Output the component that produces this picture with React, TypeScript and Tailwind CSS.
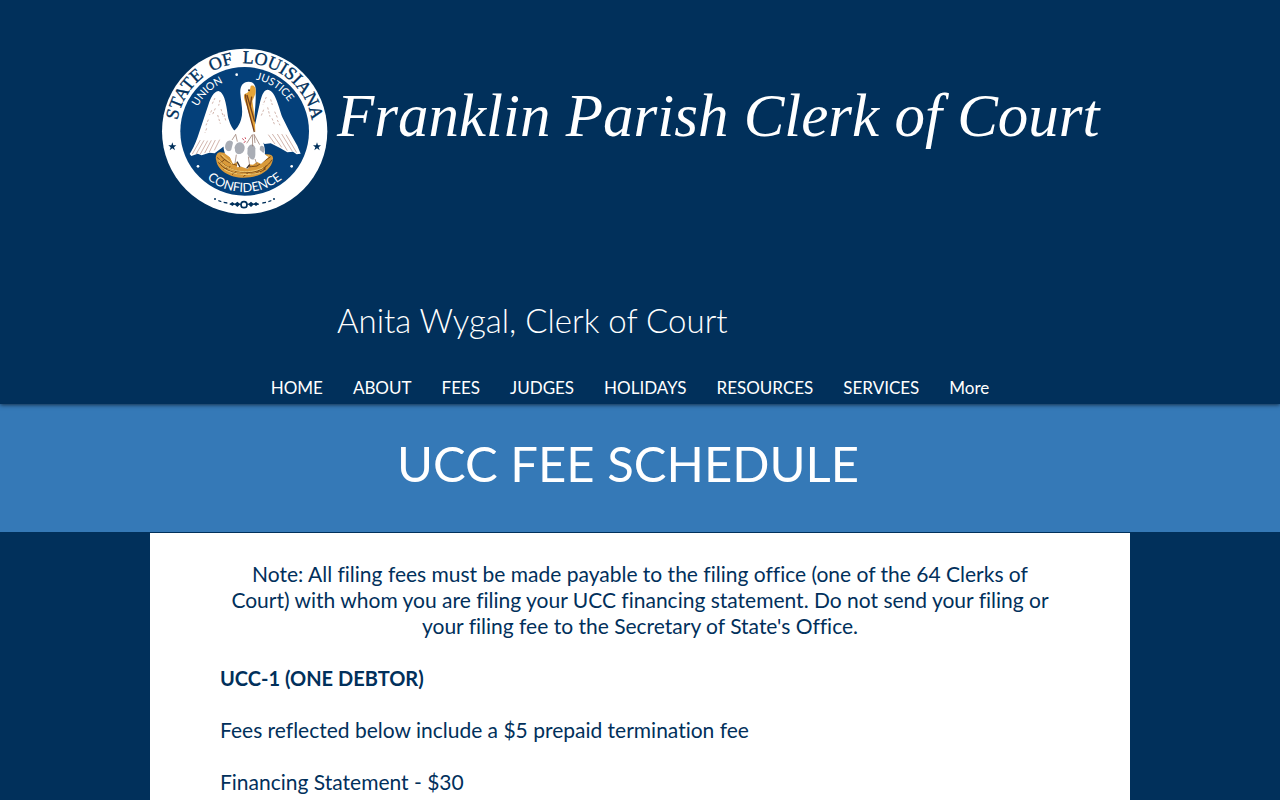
const navItems = [
  "HOME",
  "ABOUT",
  "FEES",
  "JUDGES",
  "HOLIDAYS",
  "RESOURCES",
  "SERVICES",
  "More",
];

function Star({ x, y }: { x: number; y: number }) {
  return (
    <path
      transform={`translate(${x} ${y})`}
      d="M0-13 3-4 12-4 5 2 8 11 0 5-8 11-5 2-12-4-3-4Z"
      fill="#01305b"
    />
  );
}

function StateSeal() {
  return (
    <svg
      viewBox="18 24 504 504"
      className="w-[168px] shrink-0"
      role="img"
      aria-label="State of Louisiana seal"
    >
      <defs>
        <path id="ring-top" d="M66 294A204 204 0 1 1 472 294" />
        <path id="inner-top" d="M110 274A159 159 0 0 1 428 274" />
        <path id="inner-bottom" d="M87 274A182 182 0 0 0 451 274" />
      </defs>
      <circle cx="269" cy="274" r="248" fill="#fff" />
      <circle cx="269" cy="274" r="193" fill="#04407a" />

      {/* Ring lettering */}
      <text
        fill="#01305b"
        fontSize="54"
        fontWeight="400"
        stroke="#01305b"
        strokeWidth="1"
        fontFamily="'Liberation Serif', serif"
        textAnchor="middle"
      >
        <textPath href="#ring-top" startOffset="50%">
          STATE&#160; OF&#160; LOUISIANA
        </textPath>
      </text>
      <g fill="#fff" fontSize="32" fontFamily="Lato, sans-serif" textAnchor="middle">
        <text>
          <textPath href="#inner-top" startOffset="26%">UNION</textPath>
        </text>
        <text>
          <textPath href="#inner-top" startOffset="69%">JUSTICE</textPath>
        </text>
        <text fontSize="38">
          <textPath href="#inner-bottom" startOffset="50%">CONFIDENCE</textPath>
        </text>
      </g>
      <g fill="#fff">
        <circle cx="245" cy="104" r="4" />
        <circle cx="129" cy="379" r="4" />
        <circle cx="410" cy="379" r="4" />
      </g>
      <Star x={52} y={320} />
      <Star x={486} y={320} />

      {/* Bottom ornament */}
      <g fill="#01305b">
        <circle cx="180" cy="477" r="3" />
        <circle cx="357" cy="477" r="3" />
        <path d="M190 480l9 3v4l-9-3zM206 485l11 2v4l-11-2zM322 487l11-2v4l-11 2zM340 483l9-3v4l-9 3z" />
        <path d="M224 492l8-6 8 6-8 6zM238 493l9-8 9 8-9 8zM279 493l9-8 9 8-9 8zM295 492l8-6 8 6-8 6z" />
        <path d="M224 491h88v3h-88z" />
        <circle cx="267" cy="494" r="9" fill="#fff" stroke="#01305b" strokeWidth="5" />
      </g>

      {/* Nest */}
      <path
        d="M186 342C190 332 206 338 220 341L325 344C345 340 355 346 354 356C350 390 315 412 267 413C222 413 188 390 184 362C181 354 182 347 186 342Z"
        fill="#d99a3a"
      />
      <g fill="none" stroke="#7c4c17" strokeWidth="3">
        <path d="M187 352C208 385 252 400 286 397C317 394 340 378 351 359" />
        <path d="M190 367C220 404 285 418 333 386" />
        <path d="M196 347C220 375 264 385 306 378L347 350" />
        <path d="M205 388l21-8M231 404l16-13M265 410l18-15M302 402l14-15M326 390l8-14M196 368l12-8" />
      </g>
      <g fill="none" stroke="#f3cd75" strokeWidth="3">
        <path d="M191 359C216 394 277 407 324 383" />
        <path d="M205 386C238 407 286 407 315 398M200 344L231 372M309 366L342 347" />
      </g>

      {/* Wings and body */}
      <path
        d="M190 153C176 156 167 172 160 195L128 291C121 312 111 330 104 342L109 348L128 341L140 346L163 338L179 340L204 321L230 312L250 280C232 272 226 254 220 235C214 196 210 158 190 153Z"
        fill="#fff"
      />
      <path
        d="M337 149C325 151 320 167 314 192L297 268L310 296L329 312L347 310L375 324L397 337L414 335L425 343L437 341L427 317L407 282L382 232C369 193 359 149 337 149Z"
        fill="#fff"
      />
      <path
        d="M281 125C263 125 255 139 256 159C258 190 266 214 258 239C250 265 238 270 221 287C204 305 202 322 211 342L250 370L294 374L328 351C335 324 320 284 301 268C292 247 304 208 302 153C303 137 296 125 281 125Z"
        fill="#fff"
      />
      <g fill="none" stroke="#b98f84" strokeWidth="2">
        <path d="M180 174l-10 21M195 180l-4 17M170 211l-6 13M198 207l7 24M181 205l-8 18M160 239l-7 17M207 223l6 22M155 265l-5 13M188 225l8 26" strokeDasharray="7 5" />
        <path d="M136 300l-24 42M147 301l-24 42M158 302l-22 40M169 301l-20 38M181 300l-18 36M194 299l-16 32" />
        <path d="M334 171l-10 23M347 178l5 17M326 209l-8 20M338 202l7 28M359 215l8 18M367 240l8 16M351 235l9 22" strokeDasharray="7 5" />
        <path d="M340 284l20 28M352 282l28 40M367 282l30 50M380 282l32 52M393 284l32 54" />
      </g>

      {/* Chicks */}
      <g fill="#a9adb5">
        <path d="M212 311C217 298 231 299 234 308L228 332C217 338 206 326 212 311Z" />
        <path d="M241 316C248 302 265 304 269 320C270 334 260 345 248 342C238 338 236 326 241 316Z" />
        <path d="M278 325C282 312 297 308 301 325L301 354C292 366 281 352 277 341Z" />
        <path d="M315 320C325 311 335 329 323 342L313 341Z" />
      </g>
      <g fill="#fff">
        <path d="M218 337l21-12 7 42-12 5zM247 345l18-6 20 18-6 30-20-7-13 2zM296 360l15-33 29 25-22 20z" />
      </g>
      <g fill="none" stroke="#8b6a5c" strokeWidth="2">
        <path d="M231 300l11-17 5 22M275 310l17-26 1 35M300 309l-3-26 17 31M244 344l-4 26M280 350l5 33M300 357l6 17" />
        <path d="M246 365l9 16M284 374l-9 11" stroke="#3b312b" strokeWidth="4" />
      </g>

      {/* Head and bill */}
      <path
        d="M287 138C298 133 305 144 301 162L292 183L299 230L301 277C294 262 282 221 275 197C267 176 264 167 270 161C278 160 286 151 287 138Z"
        fill="#e5a437"
      />
      <path
        d="M271 163C273 187 284 223 298 276M276 165L299 245M290 170L286 198"
        fill="none"
        stroke="#76401c"
        strokeWidth="4"
      />
      <circle cx="282" cy="151" r="3" fill="#342b2b" />
      <path d="M262 295l5 6M270 292l2 5M266 308l6-4" stroke="#cc4a5c" strokeWidth="3" />
    </svg>
  );
}

function Header() {
  return (
    <header className="relative bg-[#01305b] text-white shadow-[0_1px_4px_rgba(0,0,0,0.6)]">
      <div className="max-w-[980px] mx-auto">
        <div className="flex items-start pt-12 pl-[11px] gap-2">
          <StateSeal />
          <div>
            <h1 className="pt-7 font-['Liberation_Serif',serif] italic text-[61px] leading-20 whitespace-nowrap">
              Franklin Parish Clerk of Court
            </h1>
            <p className="mt-35 font-[Lato,sans-serif] font-light text-[33px] leading-12">
              Anita Wygal, Clerk of Court
            </p>
          </div>
        </div>
        <nav className="flex justify-center gap-[30px] pt-[30px] pb-[2px] pr-5 font-[Lato,sans-serif] text-[17px] leading-7">
          {navItems.map((item) => (
            <a key={item} href="#" className="hover:text-[#9cc5ea]">
              {item}
            </a>
          ))}
        </nav>
      </div>
    </header>
  );
}

export default function App() {
  return (
    <div className="min-h-screen flex flex-col bg-[#01305b]">
      <Header />

      <section className="bg-[#3579b7] h-32 pt-7 pr-6 text-center">
        <h2 className="font-[Lato,sans-serif] text-[49px] leading-[62px] text-white">
          UCC FEE SCHEDULE
        </h2>
      </section>

      <main className="grow w-full max-w-[980px] mx-auto mt-px bg-white px-[70px] pt-7 font-[Lato,sans-serif] [font-variant-ligatures:none] text-[21px] leading-[26px] text-[#01305b]">
        <p className="text-center px-2">
          Note: All filing fees must be made payable to the filing office (one
          of the 64 Clerks of Court) with whom you are filing your UCC financing
          statement. Do not send your filing or your filing fee to the Secretary
          of State's Office.
        </p>
        <h3 className="mt-[26px] text-[20px] font-bold">UCC-1 (ONE DEBTOR)</h3>
        <p className="mt-[26px]">
          Fees reflected below include a $5 prepaid termination fee
        </p>
        <p className="mt-[26px]">Financing Statement - $30</p>
      </main>
    </div>
  );
}
